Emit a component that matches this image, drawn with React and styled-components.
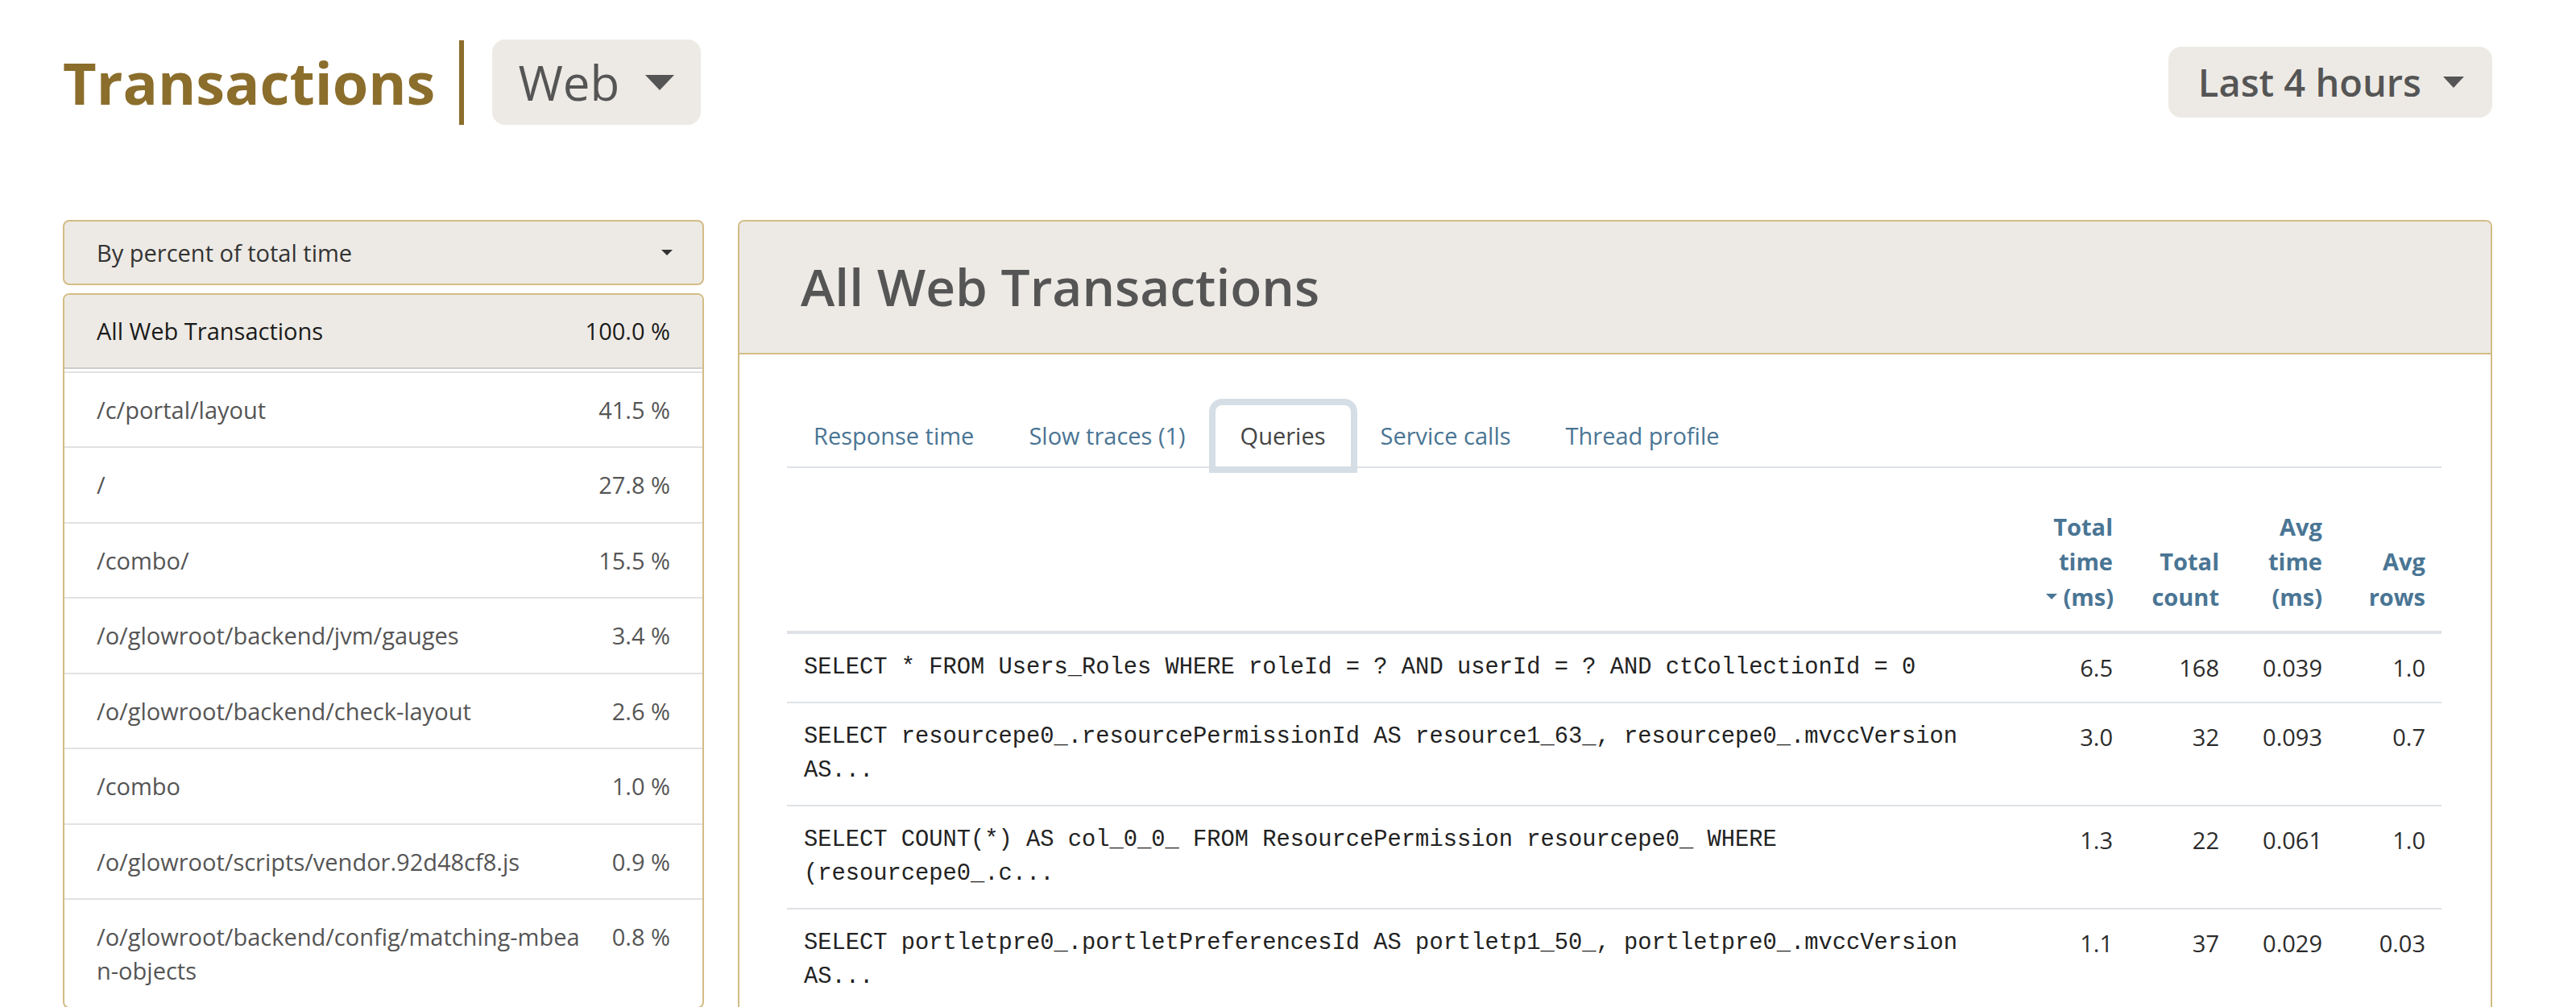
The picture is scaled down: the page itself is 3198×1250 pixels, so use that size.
import React from 'react';
import styled, { createGlobalStyle, css } from 'styled-components';

const GOLD = '#8b6d2c';
const TAN = '#d3bc85';
const BEIGE = '#edeae5';
const LINK = '#4a7594';

const Global = createGlobalStyle`
  html, body { margin: 0; padding: 0; background: #fff; }
  body { font-family: "Open Sans", "Noto Sans", sans-serif; color: #333; }
  *, *::before, *::after { box-sizing: border-box; }
`;

const Page = styled.div`
  padding: 49px 104px 0 78px;
`;

const TopBar = styled.header`
  display: flex;
  align-items: center;
  justify-content: space-between;
  height: 106px;
`;

const TitleGroup = styled.div`
  display: flex;
  align-items: center;
  height: 100%;
`;

const PageTitle = styled.h1`
  margin: 0;
  font-size: 72px;
  font-weight: 700;
  line-height: 1;
  color: ${GOLD};
`;

const Divider = styled.span`
  width: 6px;
  height: 105px;
  background: ${GOLD};
  margin: 0 35px 0 30px;
`;

const DropButton = styled.button`
  display: flex;
  align-items: center;
  gap: ${p => p.$gap}px;
  height: ${p => p.$h}px;
  padding: 0 ${p => p.$pr}px 0 ${p => p.$pl}px;
  border: 0;
  border-radius: 16px;
  background: ${BEIGE};
  color: #555;
  font-family: inherit;
  font-size: ${p => p.$size}px;
  font-weight: ${p => p.$weight};
  line-height: 1;
`;

const Caret = styled.span`
  display: inline-block;
  width: 0;
  height: 0;
  border-left: ${p => p.$w / 2}px solid transparent;
  border-right: ${p => p.$w / 2}px solid transparent;
  border-top: ${p => p.$h}px solid ${p => p.$color || 'currentColor'};
  vertical-align: middle;
`;

const Main = styled.div`
  display: grid;
  grid-template-columns: 796px 1fr;
  column-gap: 42px;
  margin-top: 118px;
  align-items: start;
`;

const Sidebar = styled.aside`
  display: flex;
  flex-direction: column;
  gap: 10px;
`;

const SortSelect = styled.div`
  display: flex;
  align-items: center;
  justify-content: space-between;
  height: 81px;
  padding: 0 37px 0 40px;
  border: 2px solid ${TAN};
  border-radius: 8px;
  background: ${BEIGE};
  font-size: 29px;
  color: #333;
`;

const TxList = styled.div`
  border: 2px solid ${TAN};
  border-radius: 8px;
  overflow: hidden;
  background: #fff;
`;

const TxItem = styled.div`
  display: flex;
  align-items: flex-start;
  justify-content: space-between;
  font-size: 29px;
  line-height: 41.5px;
  ${p => p.$header ? css`
    padding: 24px 40px 24px;
    background: ${BEIGE};
    color: #1a1a1a;
    border-bottom: 2.5px solid #cdcdcd;
    margin-bottom: 3px;
  ` : css`
    padding: 25px 40px 25px;
    color: #555;
    border-top: 2px solid #e2e2e2;
  `}
`;

const TxName = styled.span`
  flex: 1 1 auto;
  min-width: 0;
  word-break: break-all;
`;

const TxPercent = styled.span`
  flex: none;
  padding-left: 40px;
  white-space: nowrap;
`;

const Panel = styled.section`
  border: 2px solid ${TAN};
  border-radius: 8px;
  background: #fff;
  overflow: hidden;
`;

const PanelHeader = styled.div`
  display: flex;
  align-items: center;
  height: 165px;
  padding: 0 76px;
  background: ${BEIGE};
  border-bottom: 2px solid ${TAN};
`;

const PanelTitle = styled.h2`
  margin: 0;
  font-size: 64px;
  font-weight: 600;
  line-height: 1.1;
  color: #555;
`;

const PanelBody = styled.div`
  padding: 61px 61px 60px 59px;
`;

const Tabs = styled.ul`
  display: flex;
  margin: 0;
  padding: 0;
  list-style: none;
  border-bottom: 2px solid #dde2e7;
`;

const Tab = styled.li`
  margin: 0 2px -2px 0;
`;

const TabLink = styled.a`
  display: block;
  padding: 17px 31px 17.5px;
  border: 2px solid transparent;
  border-radius: 10px 10px 0 0;
  font-size: 29px;
  line-height: 41.5px;
  color: ${LINK};
  text-decoration: none;
  cursor: pointer;
  ${p => p.$active && css`
    color: #444;
    background: #fff;
    border-color: #d5dee5;
    box-shadow: 0 0 0 6px #d5dee5;
  `}
`;

const QueryTable = styled.table`
  width: 100%;
  margin-top: 30px;
  border-collapse: separate;
  border-spacing: 0;
  table-layout: fixed;

  tbody tr:first-child td { border-top: 0; }
`;

const Col = styled.col`
  width: ${p => (p.$w ? `${p.$w}px` : 'auto')};
`;

const HeadCell = styled.th`
  padding: 21px 20px;
  text-align: right;
  vertical-align: bottom;
  font-size: 29px;
  font-weight: 700;
  line-height: 43.3px;
  color: ${LINK};
  border-bottom: 4px solid #dee2e6;
`;

const NoWrap = styled.span`
  white-space: nowrap;
`;

const SortCaret = styled(Caret)`
  position: relative;
  top: -3px;
`;

const SqlCell = styled.td`
  padding: 21px 21px 21.5px;
  vertical-align: top;
  font-family: "Liberation Mono", "DejaVu Sans Mono", monospace;
  font-size: 28.75px;
  line-height: 41.7px;
  color: #222;
  border-top: 2px solid #dee2e6;
`;

const NumCell = styled.td`
  padding: 21px 20px 21.5px;
  vertical-align: top;
  text-align: right;
  font-size: 29px;
  line-height: 41.7px;
  color: #2b2b2b;
  border-top: 2px solid #dee2e6;
`;

const transactions = [
  ['/c/portal/layout', '41.5 %'],
  ['/', '27.8 %'],
  ['/combo/', '15.5 %'],
  ['/o/glowroot/backend/jvm/gauges', '3.4 %'],
  ['/o/glowroot/backend/check-layout', '2.6 %'],
  ['/combo', '1.0 %'],
  ['/o/glowroot/scripts/vendor.92d48cf8.js', '0.9 %'],
  ['/o/glowroot/backend/config/matching-mbean-objects', '0.8 %'],
];

const tabs = ['Response time', 'Slow traces (1)', 'Queries', 'Service calls', 'Thread profile'];

const queries = [
  ['SELECT * FROM Users_Roles WHERE roleId = ? AND userId = ? AND ctCollectionId = 0', '6.5', '168', '0.039', '1.0'],
  ['SELECT resourcepe0_.resourcePermissionId AS resource1_63_, resourcepe0_.mvccVersion AS...', '3.0', '32', '0.093', '0.7'],
  ['SELECT COUNT(*) AS col_0_0_ FROM ResourcePermission resourcepe0_ WHERE (resourcepe0_.c...', '1.3', '22', '0.061', '1.0'],
  ['SELECT portletpre0_.portletPreferencesId AS portletp1_50_, portletpre0_.mvccVersion AS...', '1.1', '37', '0.029', '0.03'],
];

export default function App() {
  return (
    <>
      <Global />
      <Page>
        <TopBar>
          <TitleGroup>
            <PageTitle>Transactions</PageTitle>
            <Divider />
            <DropButton $h={106} $pl={32} $pr={33} $gap={32} $size={60} $weight={400}>
              Web
              <Caret $w={37} $h={19} />
            </DropButton>
          </TitleGroup>
          <DropButton $h={88} $pl={37} $pr={35} $gap={27} $size={47} $weight={600}>
            Last 4 hours
            <Caret $w={26} $h={14} />
          </DropButton>
        </TopBar>

        <Main>
          <Sidebar>
            <SortSelect>
              <span>By percent of total time</span>
              <Caret $w={14} $h={7} $color="#333" />
            </SortSelect>
            <TxList>
              <TxItem $header>
                <TxName>All Web Transactions</TxName>
                <TxPercent>100.0 %</TxPercent>
              </TxItem>
              {transactions.map(([name, pct]) => (
                <TxItem key={name}>
                  <TxName>{name}</TxName>
                  <TxPercent>{pct}</TxPercent>
                </TxItem>
              ))}
            </TxList>
          </Sidebar>

          <Panel>
            <PanelHeader>
              <PanelTitle>All Web Transactions</PanelTitle>
            </PanelHeader>
            <PanelBody>
              <Tabs>
                {tabs.map(t => (
                  <Tab key={t}>
                    <TabLink $active={t === 'Queries'}>{t}</TabLink>
                  </Tab>
                ))}
              </Tabs>
              <QueryTable>
                <colgroup>
                  <Col />
                  <Col $w={123} />
                  <Col $w={132} />
                  <Col $w={128} />
                  <Col $w={128} />
                </colgroup>
                <thead>
                  <tr>
                    <HeadCell />
                    <HeadCell>
                      Total time <NoWrap><SortCaret $w={14} $h={7} />&nbsp;(ms)</NoWrap>
                    </HeadCell>
                    <HeadCell>Total count</HeadCell>
                    <HeadCell>Avg time (ms)</HeadCell>
                    <HeadCell>Avg rows</HeadCell>
                  </tr>
                </thead>
                <tbody>
                  {queries.map(([sql, total, count, avg, rows]) => (
                    <tr key={sql}>
                      <SqlCell>{sql}</SqlCell>
                      <NumCell>{total}</NumCell>
                      <NumCell>{count}</NumCell>
                      <NumCell>{avg}</NumCell>
                      <NumCell>{rows}</NumCell>
                    </tr>
                  ))}
                </tbody>
              </QueryTable>
            </PanelBody>
          </Panel>
        </Main>
      </Page>
    </>
  );
}
